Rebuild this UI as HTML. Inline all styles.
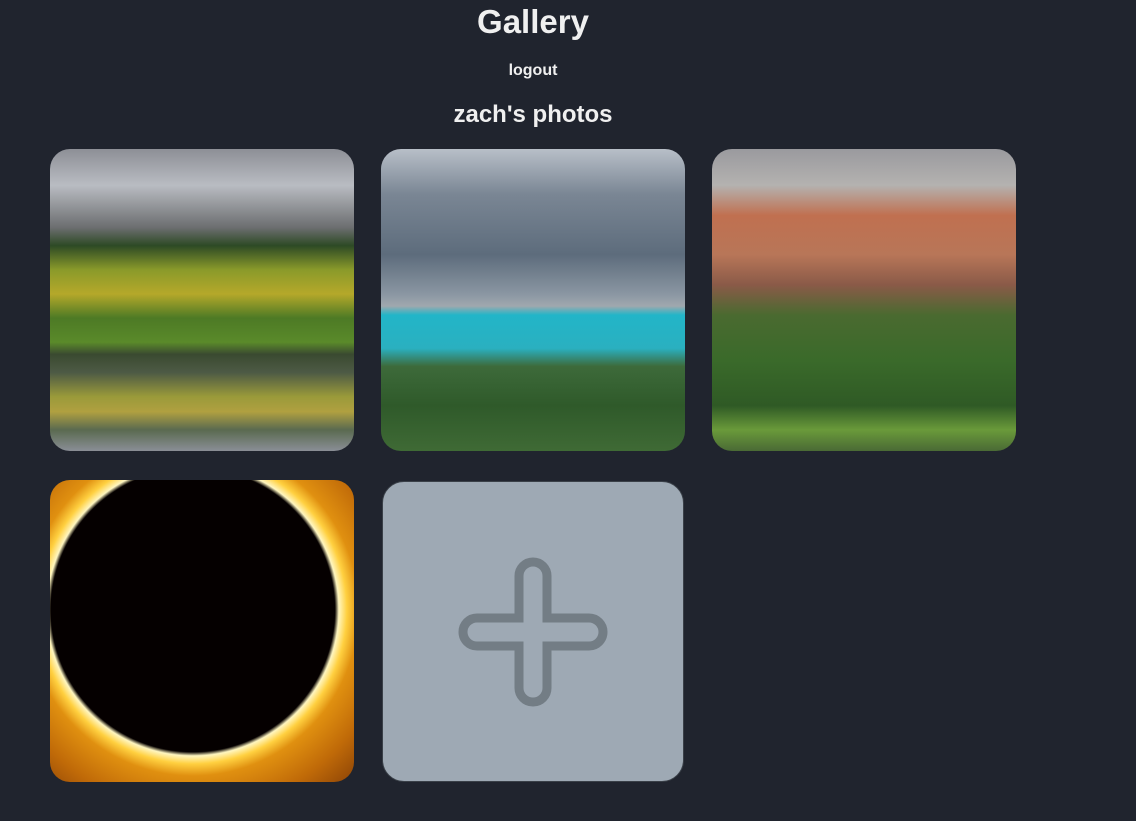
<!DOCTYPE html>
<html><head><style>
body{margin:0;background:#20242e;width:1136px;height:821px;overflow:hidden;font-family:"Liberation Sans",sans-serif;color:#f0f0f0;position:relative}
.t{position:absolute;left:0;width:1066px;text-align:center;font-weight:bold}
.tile{position:absolute;width:304px;height:302px;border-radius:20px;overflow:hidden}
</style></head><body>
<div class="t" style="top:3px;font-size:33px">Gallery</div>
<div class="t" style="top:62px;font-size:16px">logout</div>
<div class="t" style="top:101px;font-size:24px">zach's photos</div>

<div class="tile" style="left:50px;top:149px;background:linear-gradient(180deg,#8d8f96 0%,#b9bcc2 12%,#6c6e70 26%,#2d4a25 32%,#8a9a2a 40%,#b5a82a 48%,#4d7a25 56%,#5a8a2a 64%,#3a4a30 68%,#4d5a45 74%,#9a9a3a 82%,#b0a040 87%,#5a6a50 93%,#8a8e96 100%)"></div>

<div class="tile" style="left:381px;top:149px;background:linear-gradient(180deg,#b8bfc8 0%,#7a8694 15%,#5d6c7c 35%,#8a96a2 48%,#a0a8ae 52%,#22b5c8 55%,#2ab0c0 66%,#3d6a3a 72%,#2f5a2a 85%,#3f6a35 100%)"></div>

<div class="tile" style="left:712px;top:149px;background:linear-gradient(180deg,#9a9a9e 0%,#b4b2b0 12%,#c07050 22%,#b87658 35%,#8a5a48 45%,#4a6a30 55%,#3a6a2a 70%,#2f5a25 85%,#6a9a3a 93%,#4a6a35 100%)"></div>

<div class="tile" style="left:50px;top:480px;background:radial-gradient(circle at 47% 43%,#050000 0,#050000 142px,#fff6c0 146px,#ffd040 154px,#e09010 166px,#c06a08 200px,#6a2a05 260px)"></div>

<div class="tile" style="left:382px;top:481px;width:300px;height:299px;background:#9ea9b4;border:1px solid #3a4048;border-radius:22px">
<svg width="300" height="299" style="position:absolute;left:0;top:0"><g transform="translate(150,150)"><path d="M-14,-14 L-14,-56 A14,14 0 0 1 14,-56 L14,-14 L56,-14 A14,14 0 0 1 56,14 L14,14 L14,56 A14,14 0 0 1 -14,56 L-14,14 L-56,14 A14,14 0 0 1 -56,-14 Z" fill="none" stroke="#737d85" stroke-width="9" stroke-linejoin="miter"/></g></svg>
</div>
</body></html>
